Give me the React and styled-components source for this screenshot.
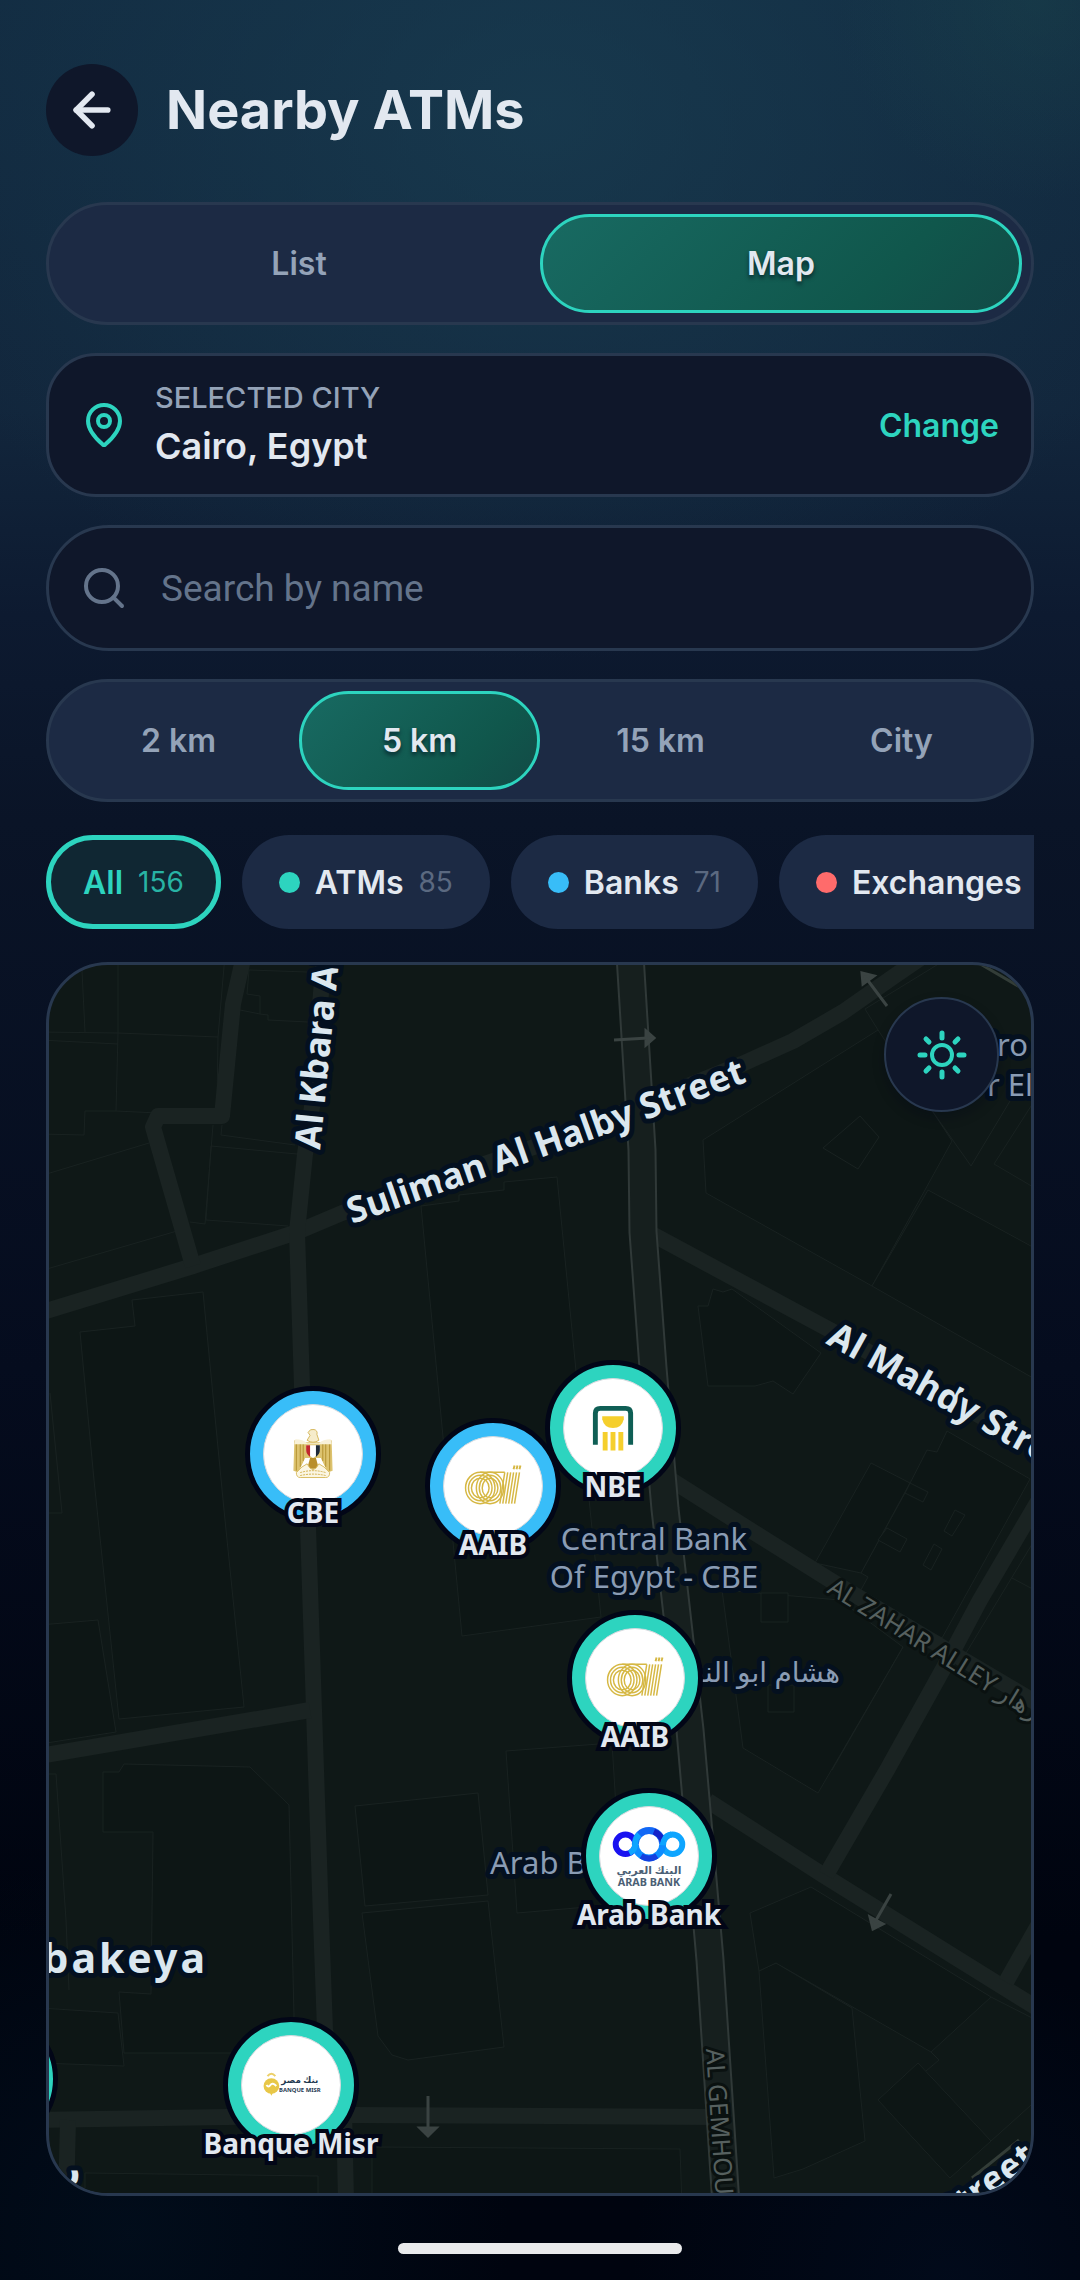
import React, { useState } from 'react'
import styled, { createGlobalStyle, css } from 'styled-components'
import { ArrowLeft, MapPin, Search } from 'lucide-react'

const colors = {
  text: '#e2e8f0',
  muted: '#94a3b8',
  faint: '#64748b',
  teal: '#2dd4bf',
  blue: '#38bdf8',
  red: '#ff6b6b',
  card: '#0f172a',
  raised: '#1c2a44',
  border: '#28384f',
  night: '#020617',
}

const views = ['List', 'Map']
const distances = ['2 km', '5 km', '15 km', 'City']

const filters = [
  { label: 'All', count: 156 },
  { label: 'ATMs', count: 85, dot: colors.teal },
  { label: 'Banks', count: 71, dot: colors.blue },
  { label: 'Exchanges', count: 0, dot: colors.red },
]

// places on the map canvas, in map pixels
const pins = [
  { name: 'CBE', logo: 'cbe', x: 264, y: 489, color: colors.blue },
  { name: 'AAIB', logo: 'aaib', x: 444, y: 521, color: colors.blue },
  { name: 'NBE', logo: 'nbe', x: 564, y: 463, color: colors.teal },
  { name: 'AAIB', logo: 'aaib', x: 586, y: 713, color: colors.teal },
  { name: 'Arab Bank', logo: 'arab', x: 600, y: 891, color: colors.teal },
  { name: 'Banque Misr', logo: 'misr', x: 242, y: 1120, color: colors.teal },
  { name: '', x: -59, y: 1114, color: colors.teal },
]

const roads = [
  'M40 1313 L193 1266 L297 1232 L342 1213 L560 1138 L742 1064 L793 1041 L843 1012 L893 977 L925 955',
  'M244 955 L233 1004 L222 1116 L158 1116 L153 1127 L193 1266',
  'M324 955 L312 1107 L305 1154 L297 1232 L302 1386 L308 1527 L314 1710 L321 1920 L325 2030 L344 2110 L346 2200',
  'M40 1756 L310 1710',
  'M40 2120 L227 2117 L353 2115 L716 2117',
  'M68 2120 L66 2200',
  'M650 1233 L830 1330 L1040 1450',
  'M668 1478 L747 1528 L830 1580 L947 1650 L1040 1705',
  'M708 1801 L823 1875 L1040 2010',
  'M826 1875 L887 1770 L947 1662 L980 1600 L1040 1498',
  'M1006 1982 L1040 1922',
]

const mainRoad =
  'M630 955 L642 1150 L643 1232 L653 1368 L665 1509 L674 1588 L690 1730 L710 1960 L726 2205'

const blocks = [
  'M132 1300 L203 1292 L224 1510 L244 1707 L119 1719 L94 1480 L80 1332 L135 1326 Z',
  'M421 1206 L459 1201 L459 1195 L504 1190 L504 1182 L557 1177 L576 1371 L601 1617 L462 1636 Z',
  'M703 1140 L878 1030 L933 1112 L952 1141 L872 1286 L706 1193 Z',
  'M823 1148 L860 1116 L879 1137 L858 1169 Z',
  'M981 1263 L1020 1287 L1010 1305 L970 1281 Z',
  'M872 1286 L928 1190 L1040 1251 V1382 Z',
  'M698 1306 H708 L713 1289 L723 1292 L732 1289 L821 1353 L793 1394 L773 1381 L755 1386 H708 Z',
  'M947 1431 L1030 1479 L942 1638 L857 1597 L868 1577 L861 1573 L905 1493 L927 1450 L937 1452 Z',
  'M815 1563 L871 1463 L910 1483 L861 1573 Z',
  'M910 1483 L928 1492 L923 1502 L905 1493 Z',
  'M955 1510 L965 1515 L952 1536 L944 1531 Z',
  'M934 1544 L942 1549 L931 1570 L923 1565 Z',
  'M887 1528 L907 1539 L900 1552 L878 1540 Z',
  'M722 1590 L743 1748 L818 1793 L903 1647 L840 1600 Z',
  'M761 1593 H788 V1622 H761 Z',
  'M768 1685 H794 V1712 H768 Z',
  'M506 1751 L612 1743 L622 1904 L517 1913 Z',
  'M355 1806 L478 1793 L488 1895 L365 1906 Z',
  'M362 1913 L488 1901 L504 2047 L408 2060 L392 2055 L378 2036 Z',
  'M103 1772 H119 L124 1764 L250 1767 L289 1805 L294 2017 L233 2053 H124 L119 1992 L151 1994 L153 1832 H103 Z',
  'M40 2008 L118 2013 L124 2066 L40 2063 Z',
  'M40 1625 L98 1620 L116 1732 L40 1744 Z',
  'M85 2173 L318 2176 V2205 H85 Z',
  'M372 2147 L680 2149 L682 2205 H372 Z',
  'M759 1971 L776 1963 L852 2008 L865 2141 L803 2169 L774 2178 Z',
  'M918 2063 L991 2141 L950 2178 L878 2100 Z',
  'M750 1913 L811 1887 L991 1997 L931 2052 L776 1963 L759 1971 Z',
]

const outlines =
  'M40 1032 L118 1033 L218 1037 M118 955 V1033 L116 1111 M82 971 L85 1032 M40 1040 L118 1044 ' +
  'M158 1113 L116 1111 H85 L84 1135 L40 1134 M40 1176 L149 1143 M40 1271 L177 1231 ' +
  'M225 955 L218 1037 L217 1107 M307 972 L249 970 L247 994 L260 996 V1014 L268 1015 V1020 L308 1022 M240 1010 L260 1014 ' +
  'M222 1125 L221 1135 L295 1145 M297 1154 L211 1146 L206 1220 L288 1226 M213 1125 L205 1224 L190 1222 ' +
  'M50 1393 L62 1513 H40 M878 1030 L865 1009 L945 960 M933 1112 L971 1166 L1013 1096 M1040 1092 L994 1164 L1040 1191 ' +
  'M960 1663 L1040 1531 M1012 1578 L1040 1593 M903 1647 L832 1770 M40 1774 H56 L66 1920 L69 1990 ' +
  'M931 2052 L939 2060 L926 2071 M991 1997 L1040 2022 M991 2141 L1040 2097 M40 2205 V2170'

const logos = {
  cbe: (
    <g>
      <path d="M-19 -14 L-7 -12 L7 -12 L19 -14 L20 17 L15 19 L8 4 L-8 4 L-15 19 L-20 17 Z" fill="#ddc36f" />
      <path
        d="M-17 -12 V17 M-13 -12 V13 M-10 -12 V7 M17 -12 V17 M13 -12 V13 M10 -12 V7"
        stroke="#b3902f"
        strokeWidth="1"
      />
      <path d="M-18 -15 Q-10 -15 -6 -11 H6 Q10 -15 18 -15 L19 -10 H-19 Z" fill="#f8f1d8" />
      <path
        d="M-5 -22 q2 -4 6 -3 q4 1 3 5 l2 6 q-6 4 -12 0 l3 -5 z"
        fill="#f6eccb"
        stroke="#d5b75c"
        strokeWidth="1"
      />
      <path d="M-7 -9 h14 v5 q-1 5 -7 8 q-6 -3 -7 -8 z" fill="#fff" />
      <path d="M-7 -9 h4 v12 q-4 -3 -4 -7 z" fill="#c1272d" />
      <path d="M7 -9 h-4 v12 q4 -3 4 -7 z" fill="#1f2937" />
      <path d="M-3 4 h6 l3 11 h-12 z" fill="#b98f2c" />
      <path
        d="M-17 19 q6 -7 11 -9 q3 6 6 6 q3 0 6 -6 q5 2 11 9 q0 5 -4 5 h-26 q-4 0 -4 -5 z"
        fill="#fbf6e3"
        stroke="#d9bc62"
        strokeWidth="1"
      />
      <path
        d="M-13 19 q13 -4 26 0 M-13 22 q13 -3 26 0"
        fill="none"
        stroke="#d2b04e"
        strokeWidth="1"
        strokeDasharray="2 1"
      />
    </g>
  ),
  aaib: (
    <g fill="none" stroke="#d6b844" strokeWidth="1.5">
      {[16, 13, 10].map((r) => (
        <g key={r}>
          <ellipse cx="-13" cy="2" rx={r - 1} ry={r} />
          <ellipse cx="-3" cy="2" rx={r - 2} ry={r} />
        </g>
      ))}
      <path d="M-13 -14 H12" />
      {[0, 3, 6, 9, 12, 15].map((dx) => (
        <path key={dx} d={`M${12 + dx} -14 L${7 + dx} 18`} />
      ))}
      <path d="M21 -17 L22 -21 M24 -17 L25 -21 M27 -17 L28 -21" strokeWidth="2" />
    </g>
  ),
  nbe: (
    <g>
      <path d="M-18 17 V-15 Q-18 -20 -13 -20 H13 Q18 -20 18 -15 V17" fill="none" stroke="#0f5f55" strokeWidth="5" />
      <path d="M-11 -12 H11 V-9 Q9 0 0 0 Q-9 0 -11 -9 Z" fill="#f5cf2d" />
      <path d="M-8 4 V23 M0 4 V23 M8 4 V23" stroke="#f5cf2d" strokeWidth="5" />
    </g>
  ),
  arab: (
    <g>
      <g fill="none">
        <circle cx="-24" cy="-12" r="10" stroke="#1a12f0" strokeWidth="6" />
        <circle cx="24" cy="-12" r="10" stroke="#0ea5ff" strokeWidth="6" />
        <path d="M-14 -12 A14 14 0 0 1 14 -12" stroke="#1268f5" strokeWidth="7" />
        <path d="M-14 -12 A14 14 0 0 0 14 -12" stroke="#0c8dff" strokeWidth="7" />
        <path d="M-20 -3 Q-14 -6 -14 -13 Q-14 -18 -10 -22" stroke="#0ea5ff" strokeWidth="6" />
        <path d="M5 -25 Q12 -22 14 -15" stroke="#1522c8" strokeWidth="6" />
        <path d="M-8 0 Q0 5 8 0" stroke="#1540e0" strokeWidth="6" />
        <path d="M14 -11 Q15 -20 23 -22" stroke="#0ea5ff" strokeWidth="6" />
      </g>
      <text y="18" fontSize="11" fontWeight="700" fill="#4b6075" textAnchor="middle">البنك العربي</text>
      <text y="31" fontSize="11" fontWeight="700" fill="#4b6075" textAnchor="middle">ARAB BANK</text>
    </g>
  ),
  misr: (
    <g>
      <path d="M-24 -9 q4 -5 8 0" fill="none" stroke="#ecd06a" strokeWidth="2" />
      <circle cx="-20" cy="1" r="8" fill="#e8c748" />
      <path d="M-22 7 h4 l-2 4 z" fill="#e8c748" />
      <path d="M-25 0 q2 3 4 0 q2 -3 6 1" fill="none" stroke="#fff" strokeWidth="2" />
      <text x="9" y="-2" fontSize="9" fontWeight="700" fill="#1f3a52" textAnchor="middle">بنك مصر</text>
      <text x="9" y="7" fontSize="6" fontWeight="700" fill="#1f3a52" textAnchor="middle">BANQUE MISR</text>
    </g>
  ),
}

const SunIcon = () => (
  <svg width="50" height="50" viewBox="0 0 50 50" fill="none" stroke={colors.teal} strokeWidth="4" strokeLinecap="round">
    <circle cx="25" cy="25" r="10" />
    <path d="M25 3 V8 M25 42 V47 M3 25 H8 M42 25 H47 M9 9 L12 12 M38 38 L41 41 M9 41 L12 38 M38 12 L41 9" strokeWidth="5" />
  </svg>
)

const StreetMap = () => (
  <MapSvg viewBox="49 965 982 1228" preserveAspectRatio="xMidYMid slice">
    <defs>
      <path id="suliman" d="M352 1224 L540 1158 L643 1121 L770 1073" />
      <path id="kbara" d="M320 1150 L342 930" />
      <path id="mahdy" d="M825 1343 L980 1429 L1100 1496" />
      <path id="zahar" d="M826 1592 L992 1695 L1160 1799" />
      <path id="gemhouria" d="M706 2049 L722 2290" />
      <path id="corner" d="M950 2226 L1080 2130" />
    </defs>
    <g fill="#0d1615" stroke="#192221" strokeWidth="1">
      {blocks.map((d) => (
        <path key={d} d={d} />
      ))}
      <path d={outlines} fill="none" />
    </g>
    <g fill="none" stroke="#1a2322" strokeWidth="16" strokeLinejoin="round">
      {roads.map((d) => (
        <path key={d} d={d} />
      ))}
    </g>
    <g fill="none">
      <path d={mainRoad} stroke="#303938" strokeWidth="29" />
      <path d={mainRoad} stroke="#161f1e" strokeWidth="25" />
      <path d="M972 2178 L1019 2140 M977 962 L1025 990" stroke="#333d38" strokeWidth="3" />
    </g>
    <g fill="#3a4342" stroke="#3a4342" strokeWidth="3">
      <path d="M614 1040 L648 1038 M646 1031 L654 1038 L646 1045 Z" />
      <path d="M887 1006 L866 978 M862 973 L874 976 L863 984 Z" />
      <path d="M428 2096 V2130 M420 2128 H436 L428 2136 Z" />
      <path d="M891 1894 L875 1922 M870 1917 L883 1924 L873 1929 Z" />
    </g>
    <StreetName>
      <textPath href="#suliman">Suliman Al Halby Street</textPath>
    </StreetName>
    <StreetName>
      <textPath href="#kbara">Al Kbara Al</textPath>
    </StreetName>
    <StreetName>
      <textPath href="#mahdy">Al Mahdy Street</textPath>
    </StreetName>
    <StreetName>
      <textPath href="#corner">Street</textPath>
    </StreetName>
    <StreetName x="60" y="2180">ر</StreetName>
    <AlleyName>
      <textPath href="#zahar">AL ZAHAR ALLEY زهار</textPath>
    </AlleyName>
    <AlleyName>
      <textPath href="#gemhouria">AL GEMHOURIA</textPath>
    </AlleyName>
    <DistrictName x="208" y="1973" textAnchor="end">bakeya</DistrictName>
    <PlaceName x="654" y="1550" textAnchor="middle">Central Bank</PlaceName>
    <PlaceName x="654" y="1588" textAnchor="middle">Of Egypt - CBE</PlaceName>
    <PlaceName x="490" y="1874">Arab Bank</PlaceName>
    <PlaceName x="1028" y="1056" textAnchor="end">Cairo</PlaceName>
    <PlaceName x="987" y="1096">r El</PlaceName>
    <PlaceName x="840" y="1682" direction="rtl" $small>هشام ابو النصر</PlaceName>
  </MapSvg>
)

const Segments = ({ options, value, onChange }) => (
  <SegmentBar>
    {options.map((el) => (
      <Segment key={el} type="button" $active={el === value} onClick={() => onChange(el)}>
        {el}
      </Segment>
    ))}
  </SegmentBar>
)

const App = () => {
  const [view, setView] = useState('Map')
  const [distance, setDistance] = useState('5 km')
  const [filter, setFilter] = useState('All')

  return (
    <React.Fragment>
      <GlobalStyle />
      <Page>
        <Header>
          <BackButton type="button" aria-label="Back">
            <ArrowLeft size={54} strokeWidth={2.5} />
          </BackButton>
          <Title>Nearby ATMs</Title>
        </Header>
        <Content>
          <Segments options={views} value={view} onChange={setView} />
          <CityCard>
            <MapPin size={48} color={colors.teal} />
            <CityText>
              <CityLabel>SELECTED CITY</CityLabel>
              <CityName>Cairo, Egypt</CityName>
            </CityText>
            <ChangeButton type="button">Change</ChangeButton>
          </CityCard>
          <SearchBox>
            <Search size={48} color={colors.faint} />
            <SearchInput type="search" aria-label="Search by name" placeholder="Search by name" />
          </SearchBox>
          <Segments options={distances} value={distance} onChange={setDistance} />
          <Chips>
            {filters.map((el) => (
              <Chip key={el.label} type="button" $active={el.label === filter} onClick={() => setFilter(el.label)}>
                {el.dot && <Dot $color={el.dot} />}
                {el.label}
                <Count $active={el.label === filter}>{el.count}</Count>
              </Chip>
            ))}
          </Chips>
          <MapPanel>
            <StreetMap />
            {pins.map((el, i) => (
              <Pin key={i} type="button" aria-label={el.name || 'ATM'} $x={el.x} $y={el.y}>
                <PinRing $color={el.color}>
                  <svg width="100" height="100" viewBox="-50 -50 100 100">
                    {logos[el.logo]}
                  </svg>
                </PinRing>
                <PinLabel>{el.name}</PinLabel>
              </Pin>
            ))}
            <ThemeButton type="button" aria-label="Light map">
              <SunIcon />
            </ThemeButton>
          </MapPanel>
        </Content>
        <HomeBar />
      </Page>
    </React.Fragment>
  )
}
export default App

const GlobalStyle = createGlobalStyle`
  * {
    box-sizing: border-box;
  }

  body {
    margin: 0;

    background: #00040f;
    color: ${colors.text};
    font-family: Inter, 'Noto Sans', sans-serif;
  }

  button,
  input {
    padding: 0;

    border: 0;
    background: none;
    color: inherit;
    font-family: inherit;
  }

  button {
    cursor: pointer;
  }
`

const Page = styled.main`
  display: flex;
  flex-direction: column;

  min-height: 100vh;
  padding: 64px 46px 26px;

  background:
    radial-gradient(circle at 96% 0, rgba(30, 80, 80, 0.3), transparent 200px),
    radial-gradient(ellipse 62% 24% at 50% 5%, rgba(26, 64, 84, 0.65), transparent),
    radial-gradient(circle at 12% 98%, rgba(4, 26, 44, 0.4), transparent 380px),
    radial-gradient(circle at 88% 100%, rgba(4, 20, 44, 0.4), transparent 320px),
    linear-gradient(180deg, #122b41 0%, #12263c 18%, #0d1a30 27%, #0a1427 36%, #050c1e 60%, #00040f 85%);
`

const Header = styled.header`
  display: flex;
  align-items: center;
  gap: 28px;

  margin-bottom: 46px;
`

const BackButton = styled.button`
  display: flex;
  align-items: center;
  justify-content: center;

  width: 92px;
  height: 92px;

  border-radius: 50%;
  background: ${colors.card};
`

const Title = styled.h1`
  margin: 0;

  font-size: 54px;
  line-height: 72px;
  font-weight: 700;
`

const Content = styled.div`
  display: flex;
  flex: 1;
  flex-direction: column;
  gap: 28px;
`

const SegmentBar = styled.div`
  display: grid;
  grid-auto-columns: 1fr;
  grid-auto-flow: column;

  height: 123px;
  padding: 9px;

  border: 3px solid ${colors.border};
  border-radius: 62px;
  background: ${colors.raised};
`

const Segment = styled.button`
  border-radius: 50px;
  color: ${colors.muted};
  font-size: 32px;
  font-weight: 600;

  ${({ $active }) =>
    $active &&
    css`
      border: 3px solid ${colors.teal};
      background: linear-gradient(135deg, #186a62, #10574c 70%, #124a46);
      color: ${colors.text};
      text-shadow: 0 3px 4px rgba(2, 6, 23, 0.6);
    `}
`

const CityCard = styled.section`
  display: flex;
  align-items: center;
  gap: 27px;

  height: 144px;
  padding: 0 32px 0 31px;

  border: 3px solid ${colors.border};
  border-radius: 50px;
  background: ${colors.card};
`

const CityText = styled.div`
  flex: 1;

  padding-bottom: 4px;
`

const CityLabel = styled.div`
  color: ${colors.muted};
  font-size: 29px;
  line-height: 46px;
  font-weight: 500;
`

const CityName = styled.div`
  font-size: 36px;
  line-height: 50px;
  font-weight: 600;
`

const ChangeButton = styled.button`
  color: ${colors.teal};
  font-size: 32px;
  font-weight: 600;
`

const SearchBox = styled.label`
  display: flex;
  align-items: center;
  gap: 33px;

  height: 126px;
  padding: 0 31px;

  border: 3px solid ${colors.border};
  border-radius: 63px;
  background: ${colors.card};
`

const SearchInput = styled.input`
  flex: 1;

  outline: none;
  font-family: Roboto, sans-serif;
  font-size: 37px;

  &::placeholder {
    color: ${colors.faint};
  }
`

const Chips = styled.div`
  display: flex;
  gap: 21px;

  padding: 5px 0;

  overflow: hidden;
`

const Chip = styled.button`
  display: flex;
  flex-shrink: 0;
  align-items: center;
  gap: 15px;

  height: 94px;
  padding: 0 37px;

  border-radius: 47px;
  background: ${colors.raised};
  font-size: 32px;
  font-weight: 600;

  ${({ $active }) =>
    $active &&
    css`
      padding: 0 32px;

      border: 5px solid ${colors.teal};
      background: #102733;
      color: ${colors.teal};
    `}
`

const Dot = styled.span`
  width: 21px;
  height: 21px;

  border-radius: 50%;
  background: ${({ $color }) => $color};
`

const Count = styled.span`
  color: ${({ $active }) => ($active ? '#28b3a4' : '#5b6980')};
  font-size: 28px;
  font-weight: 400;
`

const MapPanel = styled.section`
  position: relative;

  flex: 1;
  min-height: 600px;

  overflow: hidden;

  border: 3px solid ${colors.border};
  border-radius: 62px;
  background: #0f1817;
`

const MapSvg = styled.svg`
  position: absolute;
  top: 0;
  left: 0;

  width: 100%;
  height: 100%;
`

const MapText = styled.text`
  font-family: 'Noto Sans', 'DejaVu Sans', sans-serif;
  paint-order: stroke;
  stroke: #04101f;
  stroke-width: 10px;
  stroke-linejoin: round;
`

const StreetName = styled(MapText)`
  fill: #dbe7ef;
  font-size: 36px;
  font-weight: 700;
`

const DistrictName = styled(MapText)`
  fill: #dbe7ef;
  font-size: 41px;
  font-weight: 700;
  letter-spacing: 3px;
`

const PlaceName = styled(MapText)`
  fill: #8a9cb4;
  font-size: ${({ $small }) => ($small ? '28px' : '31px')};
`

const AlleyName = styled(MapText)`
  fill: #56605f;
  stroke: #0a1110;
  stroke-width: 6px;
  font-size: 25px;
`

const Pin = styled.button`
  position: absolute;
  top: ${({ $y }) => $y}px;
  left: ${({ $x }) => $x}px;

  display: flex;
  flex-direction: column;
  align-items: center;

  margin: -68px 0 0 -100px;
  width: 200px;
`

const PinRing = styled.span`
  display: flex;

  padding: 13px;

  border: 5px solid ${colors.night};
  border-radius: 50%;
  background: ${({ $color }) => $color};

  svg {
    border: 1px solid #d5d9de;
    border-radius: 50%;
    background: #fff;
    font-family: 'Noto Sans', 'DejaVu Sans', sans-serif;
  }
`

const PinLabel = styled.span`
  margin-top: -28px;

  font-family: 'Noto Sans', sans-serif;
  font-size: 28px;
  line-height: 36px;
  font-weight: 700;
  white-space: nowrap;
  paint-order: stroke;
  -webkit-text-stroke: 8px ${colors.night};
`

const ThemeButton = styled.button`
  position: absolute;
  top: 32px;
  right: 32px;

  display: flex;
  align-items: center;
  justify-content: center;

  width: 115px;
  height: 115px;

  border: 2px solid ${colors.border};
  border-radius: 50%;
  background: ${colors.card};
  box-shadow: 0 6px 12px rgba(2, 6, 23, 0.3);
`

const HomeBar = styled.div`
  align-self: center;

  width: 284px;
  height: 11px;
  margin-top: 47px;

  border-radius: 6px;
  background: #e9eaec;
`
